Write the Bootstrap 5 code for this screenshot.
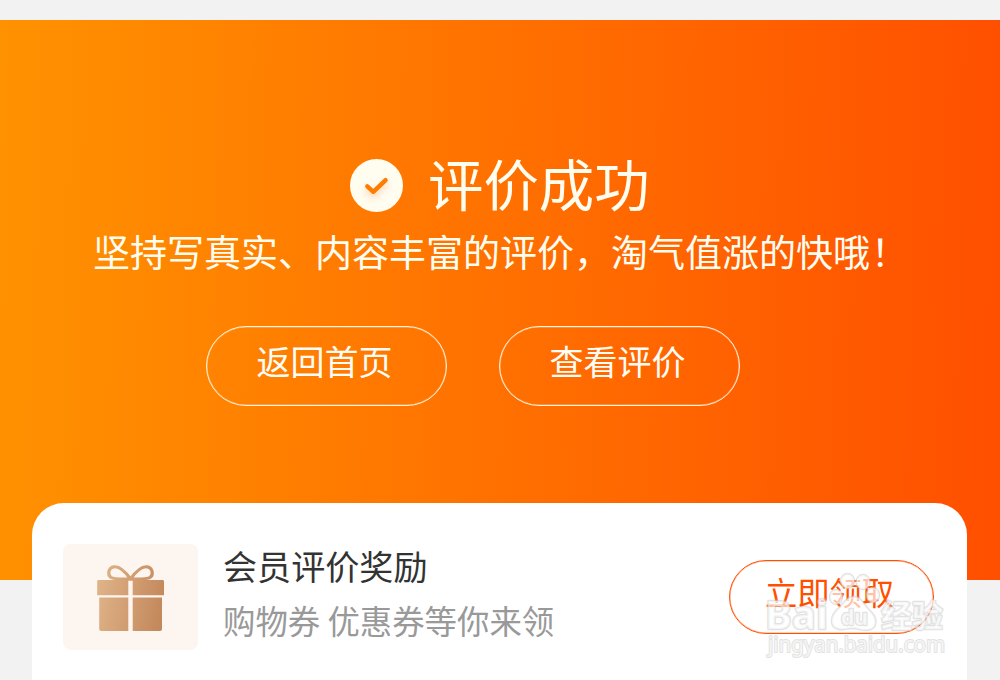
<!DOCTYPE html>
<html lang="zh-CN">
<head>
<meta charset="utf-8">
<meta name="viewport" content="width=device-width, initial-scale=1">
<title>评价成功</title>
<link href="https://cdn.jsdelivr.net/npm/bootstrap@5.3.0/dist/css/bootstrap.min.css" rel="stylesheet">
<style>
body{background:#f2f2f2;font-family:"Noto Sans CJK SC",sans-serif;height:680px}
.hero{height:560px;margin-top:20px;padding-top:130px;background:linear-gradient(91.5deg,#ff9200 0%,#ff4f00 100%);color:#fffdf0}
.hero-title{font-size:55.4px;line-height:70px;height:70px;gap:25px;padding-left:350px}
.hero-title span{padding-bottom:7px}
.hero-note{font-size:37px;line-height:56px;margin:3px 0 0 93px;white-space:nowrap}
.hero-note span{margin-left:1px}
.hero-actions{margin:47px 0 0 206px;gap:52px}
.btn-hero{width:241px;height:80px;border:1px solid #fff5e0;box-shadow:inset 0 0 0 .5px #fff5e080;color:#fffdf6;font-size:34px;line-height:66px;padding:0 4px 10px 0}
.btn-hero:hover,.btn-claim:hover{background:#fff3ea}
.reward{margin:-77px 33px 0 32px;height:177px;border-radius:32px 32px 0 0;padding:41px 33px 0 31px}
.gift{width:135px;height:106px;border-radius:8px;background:#fdf5ef}
.reward-text{margin:-4px 0 0 25px;white-space:nowrap}
.reward-name{font-size:34.1px;line-height:50px;color:#333}
.reward-note{font-size:32.4px;line-height:48px;color:#999;margin-top:6px}
.btn-claim{width:205px;height:74px;margin-top:16px;border:1px solid #ff5000;box-shadow:inset 0 0 0 .5px #ff500080;color:#ff5000;font-size:32.3px;line-height:60px;padding:0 4px 12px 0}
.stamp{left:758px;top:566px;pointer-events:none}
</style>
</head>
<body class="overflow-hidden position-relative">
<div class="d-flow-root overflow-hidden">
  <header class="hero">
    <div class="hero-title d-flex align-items-center">
      <svg width="53" height="53" viewBox="0 0 53 53" aria-hidden="true">
        <defs><filter id="glow" x="-50%" y="-50%" width="200%" height="250%"><feDropShadow dx="0" dy="4" stdDeviation="3" flood-color="#ff5000" flood-opacity=".25"/></filter></defs>
        <circle cx="26.500" cy="26.500" r="26.500" fill="#fffdf0"/>
        <path d="M17.300 27.300 23.300 32.800 35.600 21.200" fill="none" stroke="#ff7b00" stroke-width="4.400" stroke-linecap="round" stroke-linejoin="round" filter="url(#glow)"/>
      </svg>
      <span>评价成功</span>
    </div>
    <p class="hero-note">坚持写真实、内容丰富的评价，淘气值涨的快哦<span>！</span></p>
    <div class="hero-actions d-flex">
      <button class="btn btn-hero rounded-pill" type="button">返回首页</button>
      <button class="btn btn-hero rounded-pill" type="button">查看评价</button>
    </div>
  </header>
  <section class="reward bg-white d-flex align-items-start position-relative">
    <div class="gift flex-shrink-0">
      <svg class="d-block" width="135" height="106" viewBox="0 0 135 106" aria-hidden="true">
        <defs><linearGradient id="tan" gradientUnits="userSpaceOnUse" x1="34" y1="45" x2="101" y2="57"><stop stop-color="#dfb388"/><stop offset="1" stop-color="#c3885c"/></linearGradient></defs>
        <path fill="url(#tan)" d="M35.500 36H65.300V51.300H34.200V37.300Q34.200 36 35.500 36ZM69.700 36H99.600Q101 36 101 37.300V51.300H69.700ZM36.200 53.500H65.300V87H38.200Q36.200 87 36.200 85ZM69.700 53.500H99V85Q99 87 97 87H69.700Z"/>
        <path d="M67.500 35C62.500 28 57 22 51 22.800C45.500 23.500 44 31 48 33.500C51 35.500 59 35 67.500 35C76 35 84 35.500 87 33.500C91 31 89.500 23.500 84 22.800C78 22 72.500 28 67.500 35Z" fill="none" stroke="url(#tan)" stroke-width="3.200" stroke-linejoin="round"/>
      </svg>
    </div>
    <div class="reward-text">
      <div class="reward-name">会员评价奖励</div>
      <div class="reward-note">购物券 优惠券等你来领</div>
    </div>
    <button class="btn btn-claim rounded-pill ms-auto" type="button">立即领取</button>
  </section>
</div>
<svg class="stamp position-absolute" width="200" height="100" viewBox="758 566 200 100" aria-hidden="true">
  <g fill="#fff" fill-opacity=".65" stroke="#cfcfcf" stroke-width="2.400" stroke-opacity=".6" stroke-linejoin="round" paint-order="stroke" font-weight="700">
    <text x="765" y="629" font-family="Noto Sans" font-size="39" textLength="63" lengthAdjust="spacingAndGlyphs">Bai</text>
    <ellipse cx="847.500" cy="581" rx="6.500" ry="7"/>
    <ellipse cx="863" cy="582" rx="6.500" ry="7"/>
    <ellipse cx="836" cy="597" rx="6" ry="7"/>
    <ellipse cx="873" cy="595" rx="6" ry="7"/>
    <path d="M854 597C861 597 863 604 869 610C879 619 877 630 866 630C860 630 857 628 852 628C847 628 844 630 839 629C829 627 830 616 839 608C844 603 847 597 854 597Z"/>
    <text x="841" y="625" font-family="Noto Sans" font-size="21" textLength="27" lengthAdjust="spacingAndGlyphs">du</text>
    <text x="881" y="627" font-family="Noto Sans CJK SC" font-size="31">经验</text>
    <text x="768" y="652" font-family="Noto Sans" font-size="21" font-weight="400" stroke-width="2" textLength="177" lengthAdjust="spacingAndGlyphs">jingyan.baidu.com</text>
  </g>
</svg>
<script src="https://cdn.jsdelivr.net/npm/bootstrap@5.3.0/dist/js/bootstrap.bundle.min.js"></script>
</body>
</html>
